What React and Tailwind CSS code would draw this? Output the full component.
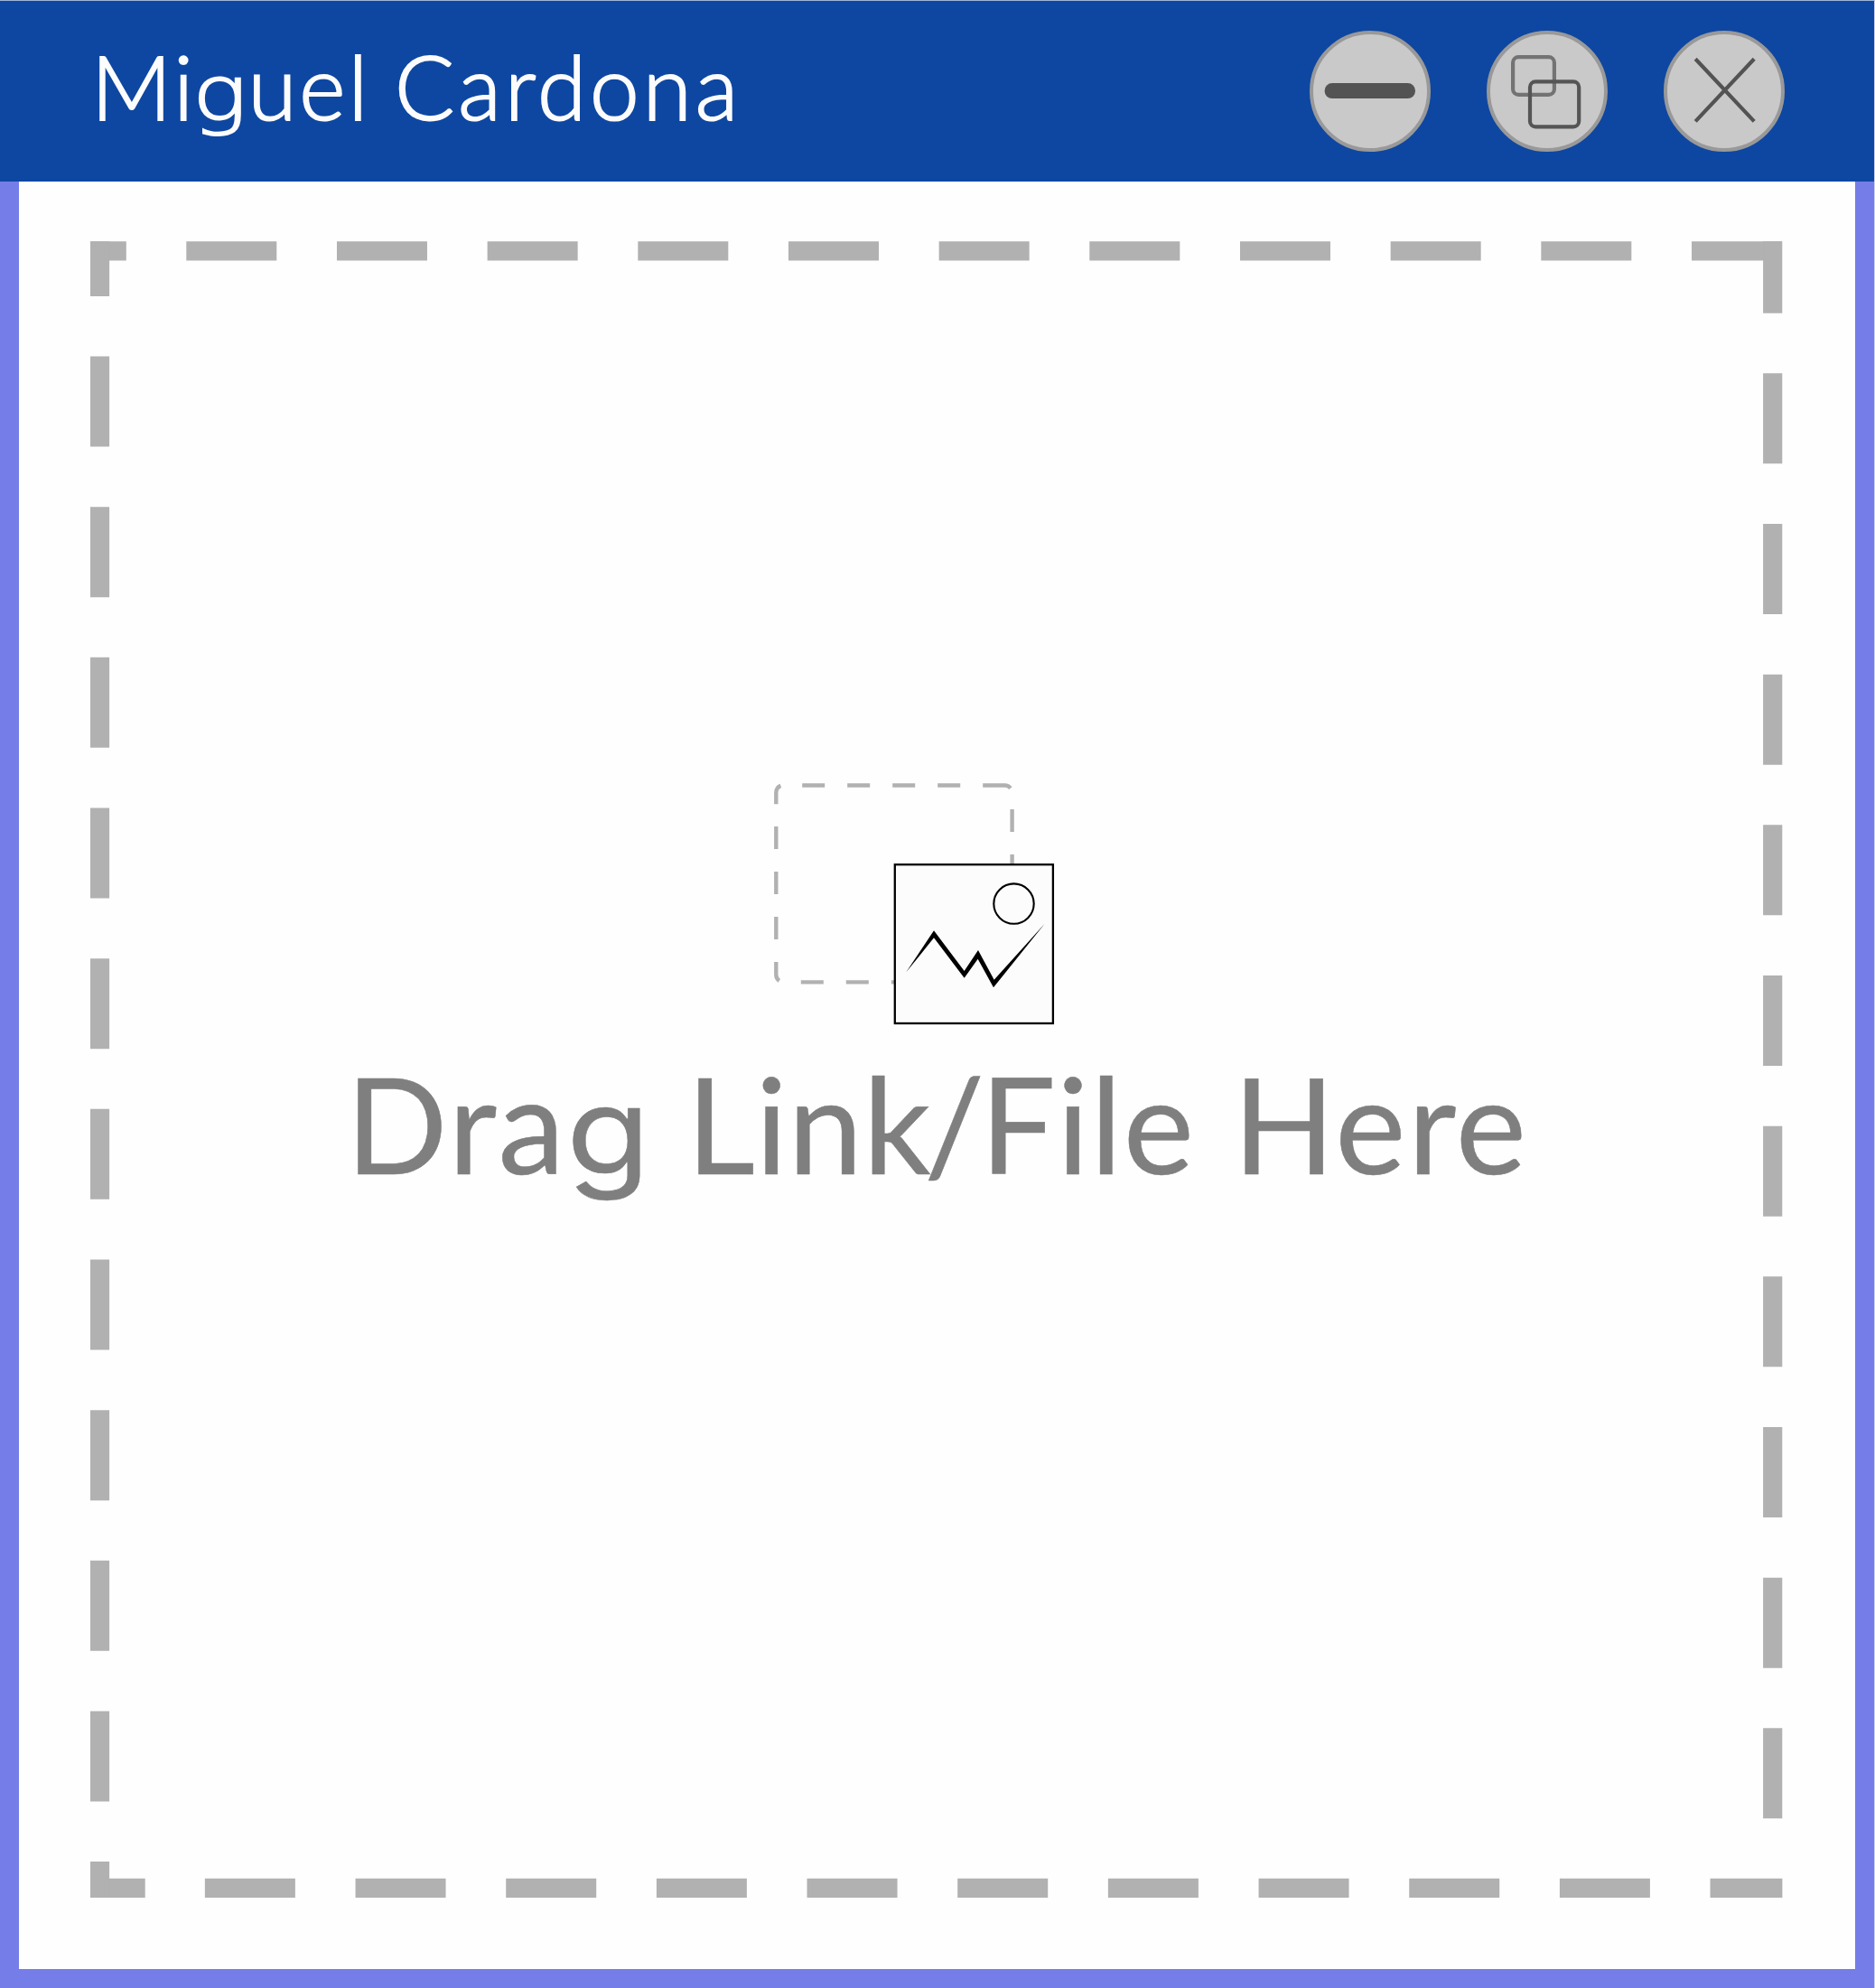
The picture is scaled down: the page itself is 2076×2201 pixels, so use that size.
const RING = 'flex size-[134px] items-center justify-center rounded-full border-[4.3px] border-[#999999] bg-[#c9c9c9]';

function Minimize() {
  return (
    <button aria-label="Minimize" className={RING}>
      <svg viewBox="1450 34 134 134" className="size-[134px] shrink-0">
        <rect x="1466.6" y="92.1" width="100.4" height="17" rx="8.4" fill="#535353" />
      </svg>
    </button>
  );
}

function Restore() {
  return (
    <button aria-label="Restore" className={RING}>
      <svg viewBox="1646 34 134 134" className="size-[134px] shrink-0" fill="none" strokeWidth="4.2">
        <rect x="1675.1" y="63.2" width="45.8" height="41.7" rx="6.2" stroke="#737373" />
        <rect x="1694" y="90.3" width="54.2" height="50.1" rx="6.2" stroke="#555555" />
      </svg>
    </button>
  );
}

function Close() {
  return (
    <button aria-label="Close" className={RING}>
      <svg viewBox="1842 34 134 134" className="size-[134px] shrink-0" fill="none" stroke="#535353" strokeWidth="4.2">
        <path d="M1877.2 65.2 1942.2 134.4M1942.2 65.2 1877.2 134.4" />
      </svg>
    </button>
  );
}

function DashedOutline() {
  return (
    <svg viewBox="100 267 1874 1834" className="absolute inset-0 h-[1834px] w-[1874px]" fill="none" stroke="#b1b1b1" strokeWidth="21.2">
      <path d="M100 277.8H139.8" />
      <path d="M206.3 277.8H1973.4" strokeDasharray="100 66.67" />
      <path d="M1962.7 267.2V346.7" />
      <path d="M1962.7 413.3V2014" strokeDasharray="100 66.67" />
      <path d="M1973.4 2090.4H1893.5" />
      <path d="M1826.9 2090.4H226" strokeDasharray="100 66.67" />
      <path d="M100 2090.4H160.7" />
      <path d="M110.5 2101V2061" />
      <path d="M110.5 1994.5V394" strokeDasharray="100 66.67" />
      <path d="M110.5 267.2V328" />
    </svg>
  );
}

function PictureDrop() {
  return (
    <svg viewBox="857 866 312 270" className="h-[270px] w-[312px]" fill="none">
      <g stroke="#b1b1b1" strokeWidth="4.4">
        <path d="M864.4 869.9A8.3 8.3 0 0 0 859.3 877.5V890.3" />
        <path d="M888.2 869.5H1075" strokeDasharray="25 25" />
        <path d="M1088.2 869.5H1112.5A8.3 8.3 0 0 1 1118.9 872.6" />
        <path d="M1120.6 896V960" strokeDasharray="25 25" />
        <path d="M859.3 915.1V1041" strokeDasharray="25 25" />
        <path d="M859.3 1065V1079.2A8.3 8.3 0 0 0 862.8 1085.9" />
        <path d="M886.8 1087.4H995" strokeDasharray="25 25" />
      </g>
      <rect x="990.8" y="957.2" width="175.1" height="175.8" fill="#fcfcfc" stroke="#000" strokeWidth="2.3" />
      <circle cx="1122.5" cy="1000.6" r="22.2" stroke="#000" strokeWidth="2.1" />
      <path
        transform="translate(840 850) scale(.33333)"
        fill="#000"
        d="M490 679 582 541 683 675 729 606 782 704 950 518 780 730 728 635 683 698 582 565Z"
      />
    </svg>
  );
}

export default function App() {
  return (
    <div className="flex h-[2201px] w-[2076px] flex-col overflow-hidden border-t border-r border-t-[#9fb5d9] border-r-[#c8cff3] bg-[#fefefe] font-['Lato',sans-serif]">
      <header className="flex h-[200px] shrink-0 items-center justify-between bg-[#0e47a1] pr-[99px] pl-[101px]">
        <h1 className="flex h-[200px] text-[98px] leading-[188px] font-light whitespace-pre text-[#fcfcfc] [-webkit-text-stroke:2px_#fcfcfc]">
          <span className="w-[336px] tracking-[3px]">
            Mi
            <span className="mr-[8px] -ml-[4px] inline-block origin-left scale-x-[1.2] font-['DejaVu_Sans_Light','DejaVu_Sans'] text-[84px] font-extralight">
              g
            </span>
            uel{' '}
          </span>
          <span className="tracking-[4.1px]">Cardona</span>
        </h1>
        <div className="flex gap-[62px]">
          <Minimize />
          <Restore />
          <Close />
        </div>
      </header>
      <main className="flex grow border-x-[21px] border-b-[21px] border-[#757ee8] px-[79px] pt-[66px]">
        <section className="relative flex h-[1834px] w-[1874px] shrink-0 flex-col items-start">
          <DashedOutline />
          <div className="mt-[599px] ml-[757px]">
            <PictureDrop />
          </div>
          <p className="mt-[17px] ml-[283px] flex h-[180px] text-[148px] leading-[180px] whitespace-pre text-[#7f7f7f] [-webkit-text-stroke:0.5px_#7f7f7f]">
            <span className="w-[377px] tracking-[2.4px]">
              Dra
              <span className="inline-block origin-left scale-x-[1.13] font-['Inter'] text-[134px]">g</span>{' '}
            </span>
            <span>
              <span className="tracking-[0.5px]">Lin</span>
              <span className="tracking-[-7.5px]">k</span>
              <span className="tracking-[-5px]">/</span>
            </span>
            <span className="w-[280px] tracking-[1.6px]">File </span>
            <span className="tracking-[2.3px]">Here</span>
          </p>
        </section>
      </main>
    </div>
  );
}
